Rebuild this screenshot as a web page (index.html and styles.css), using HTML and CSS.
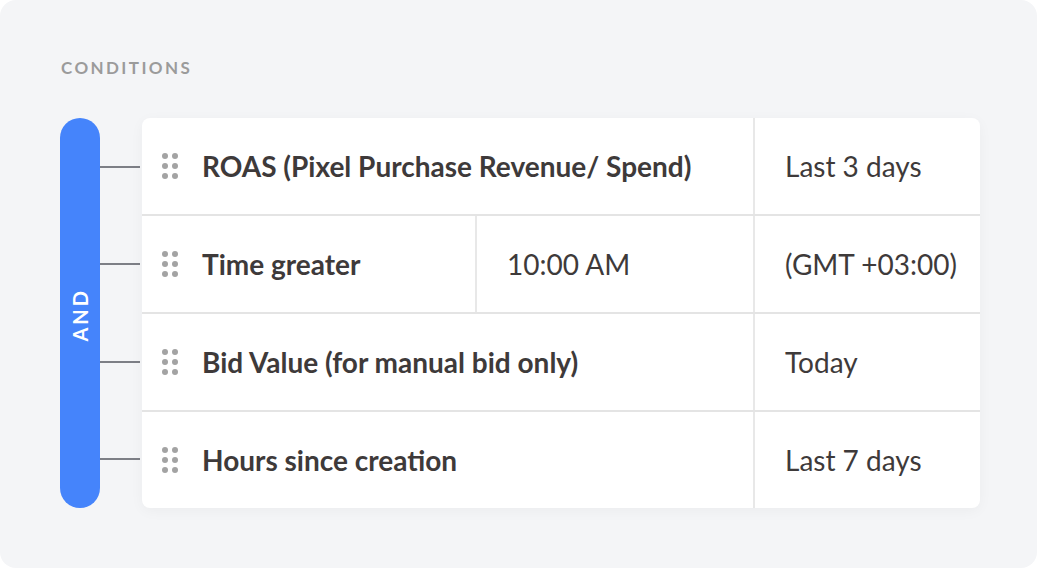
FILE: index.html
```html
<!DOCTYPE html>
<html>
    <head>
        <title>Conditions</title>
        <link rel="stylesheet" href="styles.css">
    </head>
    <body>
        <div class="panel">
            <div class="panelTitle">CONDITIONS</div>
            <div class="group">
                <div class="andPill"><span>AND</span></div>
                <div class="links">
                    <div class="link"><span></span></div>
                    <div class="link"><span></span></div>
                    <div class="link"><span></span></div>
                    <div class="link"><span></span></div>
                </div>
                <div class="card">
                    <div class="condRow">
                        <div class="cell mainCell">
                            <div class="handle"><i></i><i></i><i></i><i></i><i></i><i></i></div>
                            <span class="label">ROAS (Pixel Purchase Revenue/ Spend)</span>
                        </div>
                        <div class="cell valueCell">Last 3 days</div>
                    </div>
                    <div class="condRow splitRow">
                        <div class="cell mainCell">
                            <div class="handle"><i></i><i></i><i></i><i></i><i></i><i></i></div>
                            <span class="label">Time greater</span>
                        </div>
                        <div class="cell valueCell">10:00 AM</div>
                        <div class="cell valueCell">(GMT +03:00)</div>
                    </div>
                    <div class="condRow">
                        <div class="cell mainCell">
                            <div class="handle"><i></i><i></i><i></i><i></i><i></i><i></i></div>
                            <span class="label">Bid Value (for manual bid only)</span>
                        </div>
                        <div class="cell valueCell">Today</div>
                    </div>
                    <div class="condRow">
                        <div class="cell mainCell">
                            <div class="handle"><i></i><i></i><i></i><i></i><i></i><i></i></div>
                            <span class="label">Hours since creation</span>
                        </div>
                        <div class="cell valueCell">Last 7 days</div>
                    </div>
                </div>
            </div>
        </div>
    </body>
</html>
```

FILE: styles.css
```css
body{
    margin: 0;
    padding: 0;
    background-color: #ffffff;
    font-family: 'Lato', 'Open Sans', sans-serif;
}

.panel{
    width: 1037px;
    height: 568px;
    box-sizing: border-box;
    background-color: #f4f5f7;
    border-radius: 16px;
    padding: 55px 57px 0 60px;
}

.panelTitle{
    font-size: 17px;
    font-weight: bold;
    letter-spacing: 2.4px;
    color: #9b9b9b;
    line-height: 26px;
    padding-left: 1px;
}

.group{
    display: flex;
    margin-top: 37px;
    height: 390px;
}

.andPill{
    width: 40px;
    border-radius: 20px;
    background-color: #4584fb;
    display: flex;
    align-items: center;
    justify-content: center;
}

.andPill span{
    writing-mode: vertical-rl;
    transform: rotate(180deg);
    color: #ffffff;
    font-weight: bold;
    font-size: 20px;
    letter-spacing: 3px;
    padding-bottom: 3px;
}

.links{
    width: 40px;
    margin-right: 2px;
    display: flex;
    flex-direction: column;
}

.link{
    flex: 1;
    display: flex;
    align-items: center;
}

.link span{
    display: block;
    width: 100%;
    height: 2px;
    background-color: #7d7f86;
}

.card{
    flex: 1;
    background-color: #ffffff;
    border-radius: 8px;
    box-shadow: 0 3px 14px rgba(0, 0, 0, 0.04);
    display: flex;
    flex-direction: column;
    overflow: hidden;
}

.condRow{
    flex: 1;
    display: grid;
    grid-template-columns: 613px 1fr;
    border-bottom: 2px solid #e4e4e4;
}

.condRow:last-child{
    border-bottom: none;
}

.splitRow{
    grid-template-columns: 335px 278px 1fr;
}

.cell{
    display: flex;
    align-items: center;
    border-right: 2px solid #e8e8e8;
    color: #3e3a3a;
    font-size: 28px;
}

.cell:last-child{
    border-right: none;
}

.mainCell{
    padding-left: 20px;
}

.valueCell{
    padding-left: 30px;
}

.handle{
    display: grid;
    grid-template-columns: 6px 6px;
    gap: 4px;
    margin-right: 24px;
}

.handle i{
    width: 6px;
    height: 6px;
    border-radius: 50%;
    background-color: #a3a3a3;
}

.label{
    font-weight: bold;
}
```
